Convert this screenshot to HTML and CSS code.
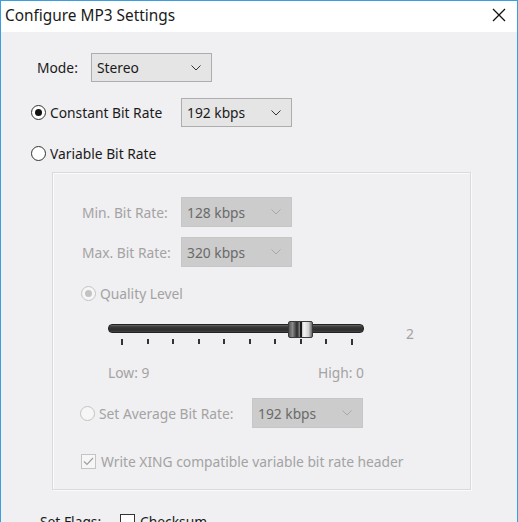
FILE: index.html
```html
<!DOCTYPE html>
<html>
<head>
<meta charset="utf-8">
<link rel="stylesheet" href="styles.css">
</head>
<body>
<div class="window">
  <div class="titlebar">
    <span class="title">Configure MP3 Settings</span>
    <svg class="close" width="14" height="14" viewBox="0 0 14 14"><path d="M1 1 L13 13 M13 1 L1 13" stroke="#111" stroke-width="1.3" fill="none"/></svg>
  </div>
  <div class="content">
    <div class="row mode-row">
      <span class="mode-label">Mode:</span>
      <div class="select sel-mode"><span>Stereo</span><svg class="chev" width="10" height="6" viewBox="0 0 10 6"><path d="M0.5 0.5 L5 5 L9.5 0.5" stroke="#333" fill="none"/></svg></div>
    </div>
    <div class="row cbr-row">
      <label class="opt opt-cbr"><span class="radio checked"></span>Constant Bit Rate</label>
      <div class="select sel-cbr"><span>192 kbps</span><svg class="chev" width="10" height="6" viewBox="0 0 10 6"><path d="M0.5 0.5 L5 5 L9.5 0.5" stroke="#333" fill="none"/></svg></div>
    </div>
    <div class="row vbr-row">
      <label class="opt"><span class="radio"></span>Variable Bit Rate</label>
    </div>
    <div class="group">
      <div class="row g-min">
        <span class="dlabel">Min. Bit Rate:</span>
        <div class="select disabled sel-g"><span>128 kbps</span><svg class="chev" width="10" height="6" viewBox="0 0 10 6"><path d="M0.5 0.5 L5 5 L9.5 0.5" stroke="#a8a8a8" fill="none"/></svg></div>
      </div>
      <div class="row g-max">
        <span class="dlabel">Max. Bit Rate:</span>
        <div class="select disabled sel-g"><span>320 kbps</span><svg class="chev" width="10" height="6" viewBox="0 0 10 6"><path d="M0.5 0.5 L5 5 L9.5 0.5" stroke="#a8a8a8" fill="none"/></svg></div>
      </div>
      <div class="row g-quality">
        <label class="opt dis"><span class="radio dis checked"></span>Quality Level</label>
      </div>
      <div class="row g-slider">
        <div class="slider">
          <div class="track"></div>
          <div class="thumb"><span class="grip"></span></div>
          <div class="ticks">
            <span class="tick end"></span><span class="tick"></span><span class="tick"></span><span class="tick"></span><span class="tick"></span><span class="tick"></span><span class="tick"></span><span class="tick"></span><span class="tick"></span><span class="tick end"></span>
          </div>
        </div>
        <span class="slider-val">2</span>
      </div>
      <div class="row g-range">
        <span>Low: 9</span>
        <span>High: 0</span>
      </div>
      <div class="row g-avg">
        <label class="opt dis opt-avg"><span class="radio dis"></span>Set Average Bit Rate:</label>
        <div class="select disabled sel-avg"><span>192 kbps</span><svg class="chev" width="10" height="6" viewBox="0 0 10 6"><path d="M0.5 0.5 L5 5 L9.5 0.5" stroke="#a8a8a8" fill="none"/></svg></div>
      </div>
      <div class="row g-xing">
        <label class="opt dis"><span class="check dis"><svg width="11" height="9" viewBox="0 0 11 9"><path d="M1 4.5 L4 7.5 L10 1" stroke="#a0a0a0" stroke-width="1.2" fill="none"/></svg></span>Write XING compatible variable bit rate header</label>
      </div>
    </div>
    <div class="row flags-row">
      <span class="flags-label">Set Flags:</span>
      <label class="opt"><span class="check"></span>Checksum</label>
    </div>
  </div>
</div>
</body>
</html>
```

FILE: styles.css
```css
* { box-sizing: border-box; }
html, body { margin: 0; padding: 0; }
body {
  width: 518px;
  height: 522px;
  overflow: hidden;
  font-family: "Noto Sans", "Liberation Sans", sans-serif;
  font-size: 13.8px;
  color: #1a1a1a;
  background: #f0eff1;
}
.window {
  width: 518px;
  height: 522px;
  border: 1px solid #3a9fe0;
  border-bottom: none;
  background: #f0eff1;
  overflow: hidden;
}
.titlebar {
  height: 31px;
  background: #ffffff;
  display: flex;
  align-items: center;
  justify-content: space-between;
  padding: 0 11px 0 4px;
}
.title {
  font-size: 15.4px;
  color: #1a1a1a;
  margin-top: -2px;
}
.close { margin-top: -3px; }
.content {
  display: flex;
  flex-direction: column;
}
.row {
  display: flex;
  align-items: center;
}
.mode-row { margin: 21px 0 0 36px; height: 29px; }
.mode-label { width: 54px; }
.select {
  position: relative;
  display: flex;
  align-items: center;
  background: #e5e5e5;
  border: 1px solid #adadad;
  padding-left: 5px;
  height: 29px;
}
.select .chev { position: absolute; right: 10px; top: 11px; }
.sel-mode { width: 121px; }
.cbr-row { margin: 16px 0 0 30px; height: 29px; }
.opt {
  display: flex;
  align-items: center;
}
.opt-cbr { width: 150px; }
.sel-cbr { width: 111px; }
.vbr-row { margin: 16px 0 0 30px; height: 20px; }
.radio {
  width: 15px;
  height: 15px;
  border: 1px solid #333;
  border-radius: 50%;
  background: #fff;
  margin-right: 4px;
  display: inline-flex;
  align-items: center;
  justify-content: center;
  flex: none;
}
.radio.checked::after {
  content: "";
  width: 7px;
  height: 7px;
  border-radius: 50%;
  background: #111;
}
.radio.dis { border-color: #c4c4c4; background: #f6f6f6; }
.radio.dis.checked::after { background: #c3c3c3; }
.group {
  margin: 9px 0 0 51px;
  width: 419px;
  height: 318px;
  border: 1px solid #dadada;
  box-shadow: inset 1px 1px 0 #fafafa, 1px 1px 0 #fafafa;
  display: flex;
  flex-direction: column;
  padding-left: 29px;
}
.dis, .dlabel, .g-range, .slider-val { color: #a3a3a3; }
.dlabel { width: 99px; }
.select.disabled {
  background: #cccccc;
  border-color: #c6c6c6;
  color: #6a6a6a;
}
.g-min { margin-top: 24px; height: 30px; }
.g-max { margin-top: 10px; height: 30px; }
.sel-g { width: 111px; height: 30px; }
.g-quality { margin-top: 16px; height: 20px; margin-left: -1px; }
.g-slider { margin-top: 18px; margin-left: 26px; height: 25px; align-items: flex-start; }
.slider {
  position: relative;
  width: 256px;
  height: 25px;
}
.track {
  margin-top: 3px;
  height: 9px;
  border-radius: 4px;
  background: linear-gradient(#6a6a6a 0, #3a3a3a 25%, #2d2d2d 70%, #444 100%);
  border: 1px solid #222;
}
.thumb {
  position: absolute;
  left: 180px;
  top: 0;
  width: 25px;
  height: 17px;
  border: 1px solid #3a3a3a;
  border-radius: 2px;
  background: linear-gradient(90deg, #555 0, #8a8a8a 15%, #2a2a2a 35%, #9a9a9a 50%, #f4f4f4 65%, #d0d0d0 85%, #666 100%);
}
.grip {
  position: absolute;
  left: 11px;
  top: 0;
  width: 2px;
  height: 15px;
  background: #1a1a1a;
}
.ticks {
  display: flex;
  justify-content: space-between;
  align-items: flex-start;
  padding: 0 11px 0 13px;
  margin-top: 6px;
}
.tick {
  width: 2px;
  height: 5px;
  background: #333;
}
.tick.end { height: 6px; }
.slider-val { margin-left: 42px; margin-top: 3px; }
.g-range {
  margin-top: 16px;
  margin-left: 26px;
  width: 256px;
  height: 20px;
  justify-content: space-between;
}
.g-avg { margin-top: 16px; height: 30px; margin-left: -2px; }
.opt-avg { width: 172px; }
.sel-avg { width: 111px; height: 30px; }
.g-xing { margin-top: 23px; height: 20px; margin-left: -1px; }
.check {
  width: 15px;
  height: 15px;
  border: 1px solid #333;
  background: #fff;
  margin-right: 5px;
  display: inline-flex;
  align-items: center;
  justify-content: center;
  flex: none;
}
.check.dis { border-color: #c4c4c4; background: #f6f6f6; }
.flags-row { margin: 21px 0 0 39px; height: 20px; }
.flags-label { width: 80px; }
```
